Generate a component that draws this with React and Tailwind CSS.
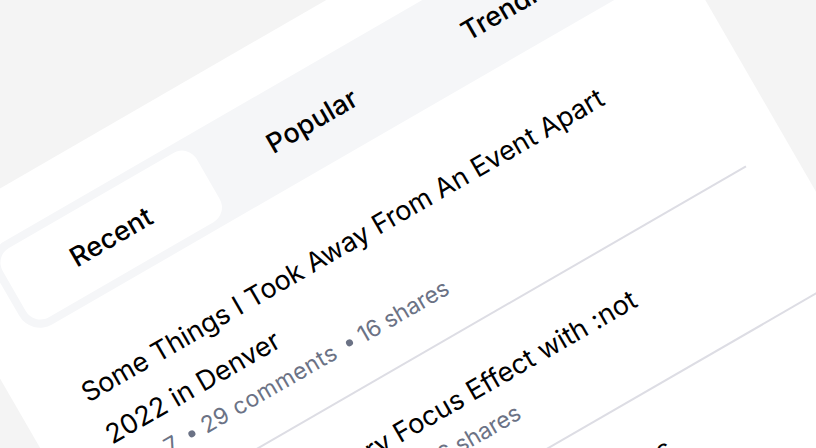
const tabs = [
  { label: "Recent", tracking: "tracking-[0.1px]", active: true },
  { label: "Popular", tracking: "tracking-[0.2px]", active: false },
  { label: "Trending", tracking: "tracking-[0px]", active: false },
];

function Bullet() {
  return <span className="size-[7px] shrink-0 rounded-full bg-[#6b7285]" />;
}

function Meta({ date, comments, shares, commentsWidth = "w-[166px]" }) {
  return (
    <div className="flex h-8 items-center text-[23px] leading-8 whitespace-nowrap text-[#6b7285]">
      <span className="w-[71px] tracking-[-0.4px]">{date}</span>
      <Bullet />
      <span className={`ml-[9px] tracking-[0.45px] ${commentsWidth}`}>{comments}</span>
      <Bullet />
      <span className="ml-[8px] tracking-[-0.15px]">{shares}</span>
    </div>
  );
}

export default function App() {
  return (
    <div
      className="h-[448px] w-[816px] overflow-hidden bg-[#f4f4f4] text-black"
      style={{ fontFamily: 'Inter, "Liberation Sans", sans-serif' }}
    >
      <div className="h-[900px] w-[800px] origin-top-left translate-x-[-82.3px] translate-y-[235.9px] -rotate-30 bg-white p-12">
        <div className="flex h-24 gap-2 rounded-[24px] bg-[#f5f6f8] p-2">
          {tabs.map((tab) => (
            <div
              key={tab.label}
              className={`flex flex-1 items-center justify-center rounded-[17px] pt-[4px] pr-[2px] text-[27px] font-medium ${tab.tracking} ${tab.active ? "bg-white" : ""}`}
            >
              {tab.label}
            </div>
          ))}
        </div>

        <div className="mt-4">
          <article className="border-b-2 border-[#dddde4] px-4 pt-[37px] pb-[29px]">
            <h2 className="text-[27px] leading-[48px] whitespace-nowrap">
              <span className="block tracking-[-0.03px]">Some Things I Took Away From An Event Apart</span>
              <span className="block tracking-[0.1px]">2022 in Denver</span>
            </h2>
            <div className="-mt-px">
              <Meta date="Jan 7" comments="29 comments" shares="16 shares" />
            </div>
          </article>
          <article className="border-b-2 border-[#dddde4] px-4 pt-[33px] pb-[29.5px]">
            <h2 className="w-[526px] text-right text-[27px] leading-[48px] whitespace-nowrap">
              A Creative Gallery Focus Effect with :not
            </h2>
            <Meta date="Jan 15" comments="8 comments" shares="26 shares" commentsWidth="w-[161px]" />
          </article>
          <article className="px-4 pt-[34px] pb-[31px]">
            <h2 className="w-[482px] text-right text-[27px] leading-[48px] whitespace-nowrap">
              Writing Better Selectors in Styles
            </h2>
            <Meta date="Jan 19" comments="12 comments" shares="24 shares" />
          </article>
        </div>
      </div>
    </div>
  );
}
